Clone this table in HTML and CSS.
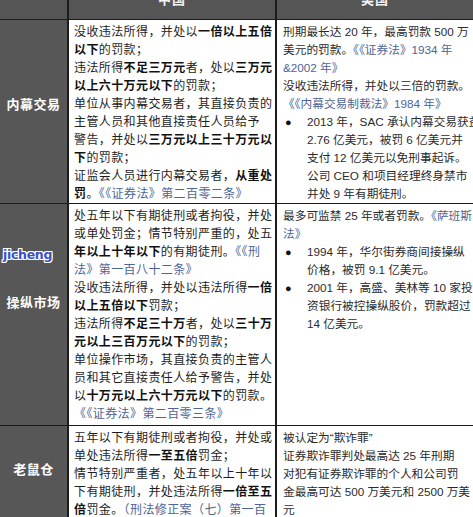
FILE: index.html
```html
<!DOCTYPE html>
<html lang="zh">
<head>
<meta charset="utf-8">
<link rel="stylesheet" href="styles.css">
</head>
<body>
<div class="table">
  <div class="hd hd-blank"></div>
  <div class="hd"><span class="hd-text">中国</span></div>
  <div class="hd"><span class="hd-text">美国</span></div>

  <div class="label label-1"><span>内幕交易</span></div>
  <div class="cell">
    <span class="ln">没收违法所得，并处以<b>一倍以上五倍</b></span>
    <span class="ln"><b>以下</b>的罚款；</span>
    <span class="ln">违法所得<b>不足三万元</b>者，处以<b>三万元</b></span>
    <span class="ln"><b>以上六十万元以下</b>的罚款；</span>
    <span class="ln">单位从事内幕交易者，其直接负责的</span>
    <span class="ln">主管人员和其他直接责任人员给予</span>
    <span class="ln">警告，并处以<b>三万元以上三十万元以</b></span>
    <span class="ln"><b>下</b>的罚款；</span>
    <span class="ln">证监会人员进行内幕交易者，<b>从重处</b></span>
    <span class="ln"><b>罚</b>。<span class="cite">《《证券法》第二百零二条》</span></span>
  </div>
  <div class="cell cell-us">
    <span class="ln">刑期最长达 20 年，最高罚款 500 万</span>
    <span class="ln">美元的罚款。<span class="cite">《《证券法》1934 年</span></span>
    <span class="ln"><span class="cite">&amp;2002 年》</span></span>
    <span class="ln">没收违法所得，并处以三倍的罚款。</span>
    <span class="ln"><span class="cite">《《内幕交易制裁法》1984 年》</span></span>
    <div class="item">
      <span class="dot">●</span>
      <div class="item-body">
        <span class="ln">2013 年，SAC 承认内幕交易获益</span>
        <span class="ln">2.76 亿美元，被罚 6 亿美元并</span>
        <span class="ln">支付 12 亿美元以免刑事起诉。</span>
        <span class="ln">公司 CEO 和项目经理终身禁市</span>
        <span class="ln">并处 9 年有期徒刑。</span>
      </div>
    </div>
  </div>

  <div class="label label-2">
    <span>操纵市场</span>
    <span class="mark">jicheng</span>
  </div>
  <div class="cell">
    <span class="ln">处五年以下有期徒刑或者拘役，并处</span>
    <span class="ln">或单处罚金；情节特别严重的，处五</span>
    <span class="ln"><b>年以上十年以下</b>的有期徒刑。<span class="cite">《《刑</span></span>
    <span class="ln"><span class="cite">法》第一百八十二条》</span></span>
    <span class="ln">没收违法所得，并处以违法所得<b>一倍</b></span>
    <span class="ln"><b>以上五倍以下</b>罚款；</span>
    <span class="ln">违法所得<b>不足三十万</b>者，处以<b>三十万</b></span>
    <span class="ln"><b>元以上三百万元以下</b>的罚款；</span>
    <span class="ln">单位操作市场，其直接负责的主管人</span>
    <span class="ln">员和其它直接责任人给予警告，并处</span>
    <span class="ln">以<b>十万元以上六十万元以下</b>的罚款。</span>
    <span class="ln"><span class="cite">《《证券法》第二百零三条》</span></span>
  </div>
  <div class="cell cell-us">
    <span class="ln">最多可监禁 25 年或者罚款。<span class="cite">《萨班斯</span></span>
    <span class="ln"><span class="cite">法》</span></span>
    <div class="item">
      <span class="dot">●</span>
      <div class="item-body">
        <span class="ln">1994 年，华尔街券商间接操纵</span>
        <span class="ln">价格，被罚 9.1 亿美元。</span>
      </div>
    </div>
    <div class="item">
      <span class="dot">●</span>
      <div class="item-body">
        <span class="ln">2001 年，高盛、美林等 10 家投</span>
        <span class="ln">资银行被控操纵股价，罚款超过</span>
        <span class="ln">14 亿美元。</span>
      </div>
    </div>
  </div>

  <div class="label label-3"><span>老鼠仓</span></div>
  <div class="cell">
    <span class="ln">五年以下有期徒刑或者拘役，并处或</span>
    <span class="ln">单处违法所得<b>一至五倍</b>罚金；</span>
    <span class="ln">情节特别严重者，处五年以上十年以</span>
    <span class="ln">下有期徒刑，并处违法所得<b>一倍至五</b></span>
    <span class="ln"><b>倍</b>罚金。<span class="cite">（刑法修正案（七）第一百</span></span>
  </div>
  <div class="cell cell-us">
    <span class="ln">被认定为“欺诈罪”</span>
    <span class="ln">证券欺诈罪判处最高达 25 年刑期</span>
    <span class="ln">对犯有证券欺诈罪的个人和公司罚</span>
    <span class="ln">金最高可达 500 万美元和 2500 万美</span>
    <span class="ln">元</span>
  </div>
</div>
</body>
</html>
```

FILE: styles.css
```css
html, body {
  margin: 0;
  padding: 0;
  background: #ffffff;
  overflow: hidden;
}

.table {
  display: grid;
  grid-template-columns: 67px 206px 1fr;
  grid-template-rows: 19px 183px 221px 91px;
  column-gap: 2px;
  row-gap: 1px;
  background: #1c1c1c;
  width: 473px;
  height: 517px;
  overflow: hidden;
  font-family: "Liberation Sans", "Noto Sans CJK SC", sans-serif;
  font-size: 12px;
  color: #1e1e1e;
}

.hd {
  background: #555555;
  overflow: hidden;
  display: flex;
  justify-content: center;
}

.hd-text {
  display: block;
  margin-top: -9px;
  line-height: 18px;
  color: #f2f2f2;
  font-weight: bold;
  font-size: 13px;
  letter-spacing: 1px;
}

.label {
  background: #575757;
  color: #ffffff;
  font-weight: bold;
  font-size: 13px;
  letter-spacing: 0.5px;
  display: flex;
  flex-direction: column;
  align-items: center;
  position: relative;
  line-height: 18px;
}

.label-1 { padding-top: 76px; }
.label-2 { padding-top: 90px; }
.label-3 { padding-top: 35px; }

.mark {
  position: absolute;
  left: 3px;
  top: 42px;
  font-family: "DejaVu Sans", sans-serif;
  font-size: 12.5px;
  font-weight: bold;
  color: #3a4fc8;
  letter-spacing: -0.3px;
  text-shadow: 1px 0 #fff, -1px 0 #fff, 0 1px #fff, 0 -1px #fff,
    1px 1px #fff, -1px -1px #fff, 1px -1px #fff, -1px 1px #fff;
}

.cell {
  background: #ffffff;
  padding: 3px 0 0 5px;
  line-height: 18px;
  letter-spacing: 0.4px;
  overflow: hidden;
}

.cell-us {
  padding-left: 6px;
  color: #2a2a2a;
  font-size: 11.7px;
  letter-spacing: 0;
}

.ln {
  display: block;
  white-space: nowrap;
}

b {
  font-weight: bold;
  color: #111111;
}

.cite {
  color: #4d6494;
}

.item {
  display: flex;
}

.dot {
  flex: none;
  width: 22px;
  padding-left: 2px;
  font-size: 11px;
  color: #111111;
}

.item-body {
  padding-left: 0;
}
```
